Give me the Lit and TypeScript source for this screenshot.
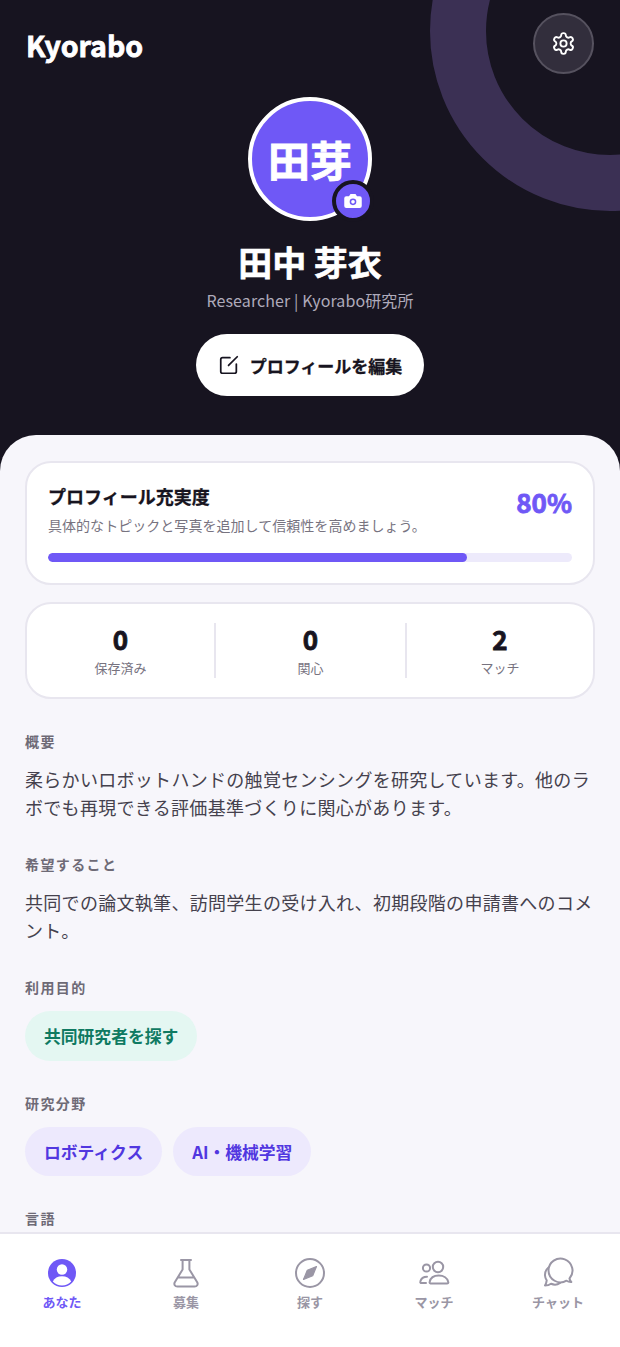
import { LitElement, html, css, svg } from "lit";
import { customElement } from "lit/decorators.js";

const tabs = [
  { label: "あなた", active: true, icon: svg`<circle cx="16" cy="16" r="14" fill="#6f58f6"/><circle cx="16" cy="12.5" r="5.2" fill="#fff"/><path d="M6.800 24.600c1.600-3.600 5-5.300 9.200-5.300s7.600 1.700 9.200 5.300A13 13 0 0 1 16 28.600a13 13 0 0 1-9.200-4z" fill="#fff"/>` },
  { label: "募集", active: false, icon: svg`<path d="M11 3h10M12.600 3v9.500L4.800 25.200c-1.200 2.200.2 4.300 2.600 4.300h17.200c2.400 0 3.800-2.100 2.600-4.300L19.400 12.500V3M8.500 20.500h15"/>` },
  { label: "探す", active: false, icon: svg`<circle cx="16" cy="16" r="14"/><path d="M22.500 9.500l-3.800 9.200-9.200 3.800 3.800-9.200z" fill="#9a96a5" stroke-width="1.2"/>` },
  { label: "マッチ", active: false, icon: svg`<circle cx="8.500" cy="11" r="3.600"/><circle cx="20" cy="10" r="5.200"/><path d="M12.500 26.500h16.500c1 0 1.500-.7 1.300-1.500-.8-4-4.700-6.500-9.500-6.500s-8.400 2.500-9.200 6.500c-.2.800.4 1.500 1.400 1.500zM8 26H3.500c-1 0-1.500-.7-1.200-1.500.8-2.800 3.400-4.700 6.700-4.700"/>` },
  { label: "チャット", active: false, icon: svg`<path d="M6.500 13.500a12 12 0 1 1 21 8c.2 1.500.8 2.600 1.800 3.500-1.800.1-3.500-.4-4.800-1.300a12 12 0 0 1-18-10.200z"/><path d="M6.500 10.500C4 12.500 2.800 15.500 3 18.500c.1 1.800.7 3.400 1.700 4.800-.2 2-.7 3.500-1.700 5.200 2.400 0 4.500-.6 6-1.700 3.200 1.300 6.500 1 9-.8"/>` },
];

@customElement("app-root")
export class AppRoot extends LitElement {
  static styles = css`
    :host { display: flex; flex-direction: column; width: 620px; height: 1347px; overflow: hidden; background: #f7f6fb; font-family: "Noto Sans CJK JP", sans-serif; }
    .scroll { flex: 1; min-height: 0; overflow: hidden; position: relative; background: #171420; }
    .hero { position: relative; height: 435px; background: #171420; color: #fff; overflow: hidden; display: flex; flex-direction: column; align-items: center; padding-top: 97px; box-sizing: border-box; }
    .ring { position: absolute; width: 360px; height: 360px; box-sizing: border-box; border: 56px solid #3b3054; border-radius: 50%; left: 430px; top: -149px; }
    .top { position: absolute; left: 26px; right: 26px; top: 13px; display: flex; justify-content: space-between; align-items: center; height: 61px; }
    .logo { font-size: 28.5px; font-weight: 700; line-height: 1; margin-top: 4px; -webkit-text-stroke: 0.8px #fff; }
    .gear { width: 61px; height: 61px; box-sizing: border-box; border-radius: 50%; background: #322e3c; border: 2px solid #56525f; display: flex; align-items: center; justify-content: center; }
    .avatar { position: relative; width: 124px; height: 124px; flex: none; box-sizing: border-box; border-radius: 50%; background: #6f58f6; border: 4px solid #fff; display: flex; align-items: center; justify-content: center; font-size: 42px; font-weight: 700; line-height: 1; -webkit-text-stroke: 0.8px #fff; }
    .cam { position: absolute; right: -6px; bottom: -5px; width: 42px; height: 42px; box-sizing: border-box; border-radius: 50%; background: #6f58f6; border: 4px solid #171420; display: flex; align-items: center; justify-content: center; }
    .name { margin-top: 19px; font-size: 34px; font-weight: 700; line-height: 44px; -webkit-text-stroke: 0.6px #fff; }
    .role { margin-top: 4px; font-size: 16px; line-height: 24px; color: #aeaaba; letter-spacing: 0.1px; }
    .edit { margin-top: 22px; width: 228px; height: 62px; border-radius: 31px; background: #fff; color: #171420; display: flex; align-items: center; justify-content: center; gap: 10px; font-size: 17px; font-weight: 700; -webkit-text-stroke: 0.3px #171420; }
    .sheet { background: #f7f6fb; border-radius: 36px 36px 0 0; padding: 26px 25px 100px; }
    .card { background: #fff; border: 2px solid #e8e6ef; border-radius: 26px; box-sizing: border-box; }
    .progress { height: 124px; padding: 20px 21px 0; }
    .phead { display: flex; justify-content: space-between; align-items: center; }
    .ptitle { font-size: 18px; font-weight: 700; line-height: 27px; color: #171420; -webkit-text-stroke: 0.3px #171420; }
    .psub { font-size: 14px; line-height: 21px; color: #77737f; margin-top: 5px; letter-spacing: 0.04px; }
    .pct { font-size: 26px; font-weight: 700; color: #6f58f6; margin-top: -17px; -webkit-text-stroke: 0.8px #6f58f6; }
    .track { margin-top: 17px; height: 9px; border-radius: 5px; background: #edeafb; overflow: hidden; }
    .fill { height: 100%; background: #6f58f6; border-radius: 5px; }
    .stats { margin-top: 17px; height: 97px; display: grid; grid-template-columns: 187px 191px 188px; padding: 19px 0; }
    .stat { display: flex; flex-direction: column; align-items: center; }
    .stat + .stat { border-left: 2px solid #e8e6ef; }
    .num { font-size: 26px; font-weight: 700; line-height: 36px; color: #171420; margin: -2px 0 1px; -webkit-text-stroke: 0.8px #171420; }
    .lab { font-size: 13px; line-height: 20px; color: #77737f; }
    h3 { margin: 0; font-size: 14px; font-weight: 700; line-height: 22px; color: #6e6a76; letter-spacing: 1.4px; }
    section { margin-top: 32px; }
    section.first { margin-top: 31px; }
    p { margin: 13px 0 0; font-size: 18px; line-height: 28px; color: #45414d; letter-spacing: 0.3px; }
    .chips { display: flex; gap: 11px; margin: 13px 0 -1px; }
    .chip { padding: 0 19px; height: 49px; display: flex; align-items: center; border-radius: 25px; font-size: 16.8px; font-weight: 700; background: #ede9fd; color: #5137e0; }
    .chip.green { background: #e4f7f2; color: #0f7a62; height: 50px; }
    .nav { flex: none; height: 115px; box-sizing: border-box; background: #fff; border-top: 2px solid #e8e6ef; display: grid; grid-template-columns: repeat(5, 1fr); padding-top: 23px; }
    .tab { display: flex; flex-direction: column; align-items: center; font-size: 13px; font-weight: 700; color: #9a96a5; line-height: 18px; }
    .tab.active { color: #6f58f6; }
    .tab svg { width: 32px; height: 32px; margin-bottom: 4px; fill: none; stroke: #9a96a5; stroke-width: 2; stroke-linecap: round; stroke-linejoin: round; }
    .tab.active svg { stroke: none; }
  `;

  render() {
    return html`
      <div class="scroll">
        <div class="hero">
          <div class="ring"></div>
          <div class="top">
            <div class="logo">Kyorabo</div>
            <div class="gear">
              <svg width="25" height="25" viewBox="0 0 24 24" fill="none" stroke="#fff" stroke-width="1.8" stroke-linecap="round" stroke-linejoin="round"><path d="M12.220 2h-.44a2 2 0 0 0-2 2v.18a2 2 0 0 1-1 1.730l-.43.25a2 2 0 0 1-2 0l-.15-.08a2 2 0 0 0-2.730.73l-.22.38a2 2 0 0 0 .73 2.730l.15.1a2 2 0 0 1 1 1.720v.51a2 2 0 0 1-1 1.740l-.15.09a2 2 0 0 0-.73 2.730l.22.38a2 2 0 0 0 2.730.73l.15-.08a2 2 0 0 1 2 0l.43.25a2 2 0 0 1 1 1.730V20a2 2 0 0 0 2 2h.44a2 2 0 0 0 2-2v-.18a2 2 0 0 1 1-1.730l.43-.25a2 2 0 0 1 2 0l.15.08a2 2 0 0 0 2.730-.73l.22-.39a2 2 0 0 0-.73-2.730l-.15-.08a2 2 0 0 1-1-1.740v-.5a2 2 0 0 1 1-1.740l.15-.09a2 2 0 0 0 .73-2.730l-.22-.38a2 2 0 0 0-2.730-.73l-.15.08a2 2 0 0 1-2 0l-.43-.25a2 2 0 0 1-1-1.730V4a2 2 0 0 0-2-2z"/><circle cx="12" cy="12" r="3"/></svg>
            </div>
          </div>
          <div class="avatar">田芽
            <div class="cam">
              <svg width="20" height="20" viewBox="0 0 24 24"><path fill="#fff" fill-rule="evenodd" d="M9 3.500h6l1.800 2.700H20a2.500 2.500 0 0 1 2.500 2.500V18a2.500 2.500 0 0 1-2.500 2.500H4A2.500 2.500 0 0 1 1.500 18V8.700A2.500 2.500 0 0 1 4 6.200h3.200zM12 9a4 4 0 1 0 0 8 4 4 0 0 0 0-8zm0 1.800a2.200 2.200 0 1 1 0 4.400 2.200 2.200 0 0 1 0-4.400z"/></svg>
            </div>
          </div>
          <div class="name">田中 芽衣</div>
          <div class="role">Researcher | Kyorabo研究所</div>
          <div class="edit">
            <svg width="22" height="22" viewBox="0 0 24 24" fill="none" stroke="#171420" stroke-width="1.900" stroke-linecap="round" stroke-linejoin="round"><path d="M13 4H5a2 2 0 0 0-2 2v13a2 2 0 0 0 2 2h13a2 2 0 0 0 2-2v-8"/><path d="M21 3l-9.500 9.500"/></svg>
            <span>プロフィールを編集</span>
          </div>
        </div>
        <div class="sheet">
          <div class="card progress">
            <div class="phead">
              <div>
                <div class="ptitle">プロフィール充実度</div>
                <div class="psub">具体的なトピックと写真を追加して信頼性を高めましょう。</div>
              </div>
              <div class="pct">80%</div>
            </div>
            <div class="track"><div class="fill" style="width:80%"></div></div>
          </div>
          <div class="card stats">
            <div class="stat"><div class="num">0</div><div class="lab">保存済み</div></div>
            <div class="stat"><div class="num">0</div><div class="lab">関心</div></div>
            <div class="stat"><div class="num">2</div><div class="lab">マッチ</div></div>
          </div>
          <section class="first"><h3>概要</h3><p>柔らかいロボットハンドの触覚センシングを研究しています。他のラボでも再現できる評価基準づくりに関心があります。</p></section>
          <section><h3>希望すること</h3><p>共同での論文執筆、訪問学生の受け入れ、初期段階の申請書へのコメント。</p></section>
          <section><h3>利用目的</h3><div class="chips"><div class="chip green">共同研究者を探す</div></div></section>
          <section><h3>研究分野</h3><div class="chips"><div class="chip">ロボティクス</div><div class="chip">AI・機械学習</div></div></section>
          <section><h3>言語</h3></section>
        </div>
      </div>
      <div class="nav">
        ${tabs.map((t) => html`<div class="tab ${t.active ? "active" : ""}"><svg viewBox="0 0 32 32">${t.icon}</svg>${t.label}</div>`)}
      </div>
    `;
  }
}
